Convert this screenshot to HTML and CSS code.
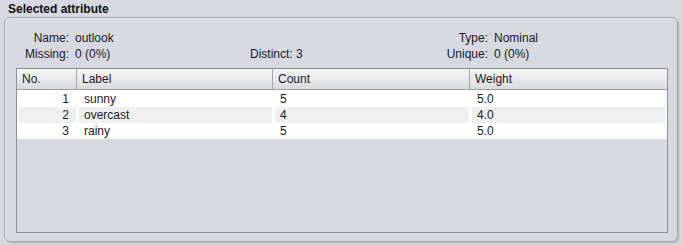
FILE: index.html
```html
<!DOCTYPE html>
<html lang="en">
<head>
  <meta charset="UTF-8">
  <title>Selected attribute</title>
  <link rel="stylesheet" href="styles.css">
</head>
<body>
  <div class="panel-title">Selected attribute</div>
  <div class="panel-box">
    <div class="info">
      <span class="lbl">Name:</span><span class="val">outlook</span>
      <span></span>
      <span class="lbl">Type:</span><span class="val">Nominal</span>

      <span class="lbl">Missing:</span><span class="val">0 (0%)</span>
      <span>Distinct: 3</span>
      <span class="lbl">Unique:</span><span class="val">0 (0%)</span>
    </div>

    <div class="table-wrap">
      <div class="thead">
        <div class="th">No.</div>
        <div class="th">Label</div>
        <div class="th">Count</div>
        <div class="th">Weight</div>
      </div>
      <div class="tbody">
        <div class="tr">
          <div class="td num">1</div>
          <div class="td">sunny</div>
          <div class="td">5</div>
          <div class="td">5.0</div>
        </div>
        <div class="tr alt">
          <div class="td num">2</div>
          <div class="td">overcast</div>
          <div class="td">4</div>
          <div class="td">4.0</div>
        </div>
        <div class="tr">
          <div class="td num">3</div>
          <div class="td">rainy</div>
          <div class="td">5</div>
          <div class="td">5.0</div>
        </div>
      </div>
    </div>
  </div>
</body>
</html>
```

FILE: styles.css
```css
html, body {
  margin: 0;
  padding: 0;
  height: 100%;
  font-family: "Liberation Sans", Arial, sans-serif;
  font-size: 12px;
  color: #1a1a1e;
  background-color: #d6d9df;
}
.panel-title {
  padding: 2px 8px 0;
  line-height: 15px;
  font-weight: bold;
  color: #111;
}
.panel-box {
  margin: 0 4px 0 4px;
  height: 225px;
  box-sizing: border-box;
  border: 1px solid #a2a5ac;
  border-radius: 6px;
  box-shadow: inset 1px 1px 0 #e4e6ea, 1px 1px 0 #bcc0c6, 2px 2px 0 #c9ccd2;
  padding: 12px 9px 0 11px;
}
.info {
  display: grid;
  grid-template-columns: 64px 181px 150px 88px 1fr;
  grid-auto-rows: 16px;
  line-height: 16px;
  margin-left: -11px;
}
.info .lbl {
  text-align: right;
}
.info .val {
  padding-left: 6px;
}
.table-wrap {
  margin-top: 6px;
  height: 165px;
  box-sizing: border-box;
  border: 1px solid #8c8f97;
  background-color: #d6d9df;
  display: flex;
  flex-direction: column;
}
.thead {
  display: grid;
  grid-template-columns: 60px 196px 197px 1fr;
  height: 21px;
  box-sizing: border-box;
  border-bottom: 1px solid #9a9da4;
  background: linear-gradient(#f6f6f7, #e6e7e9 60%, #d9dadd);
}
.th {
  padding: 1px 0 0 5px;
  line-height: 19px;
  border-right: 1px solid #a3a6ad;
}
.th:last-child {
  border-right: none;
}
.tbody {
  background-color: #fff;
  padding-top: 1px;
}
.tr {
  display: grid;
  grid-template-columns: 60px 196px 197px 1fr;
  height: 16px;
}
.td {
  margin: 0 1px 0 2px;
  padding: 1px 0 0 5px;
  line-height: 15px;
}
.td.num {
  text-align: right;
  padding: 1px 7px 0 0;
}
.tr.alt .td {
  background-color: #f0f0f0;
}
.tr.alt .td:last-child {
  margin-right: 2px;
}
```
